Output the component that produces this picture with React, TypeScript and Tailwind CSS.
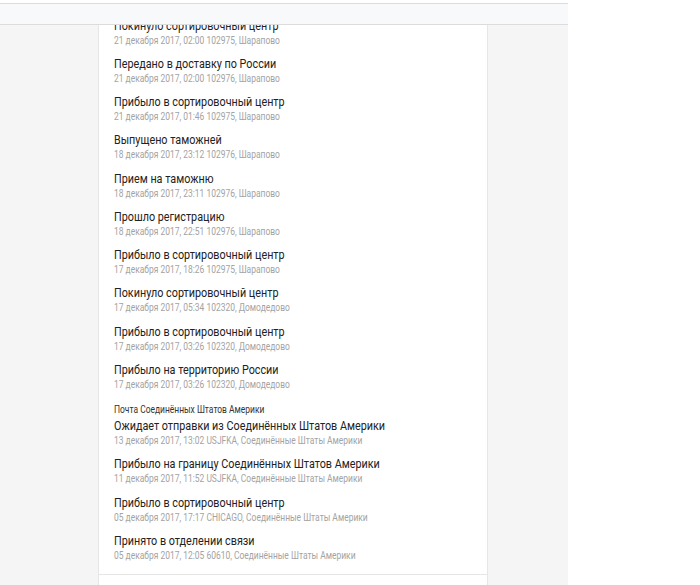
import React from "react";

type Ev = { t: string; s: string };

const ru: Ev[] = [
  { t: "Покинуло сортировочный центр", s: "21 декабря 2017, 02:00 102975, Шарапово" },
  { t: "Передано в доставку по России", s: "21 декабря 2017, 02:00 102976, Шарапово" },
  { t: "Прибыло в сортировочный центр", s: "21 декабря 2017, 01:46 102975, Шарапово" },
  { t: "Выпущено таможней", s: "18 декабря 2017, 23:12 102976, Шарапово" },
  { t: "Прием на таможню", s: "18 декабря 2017, 23:11 102976, Шарапово" },
  { t: "Прошло регистрацию", s: "18 декабря 2017, 22:51 102976, Шарапово" },
  { t: "Прибыло в сортировочный центр", s: "17 декабря 2017, 18:26 102975, Шарапово" },
  { t: "Покинуло сортировочный центр", s: "17 декабря 2017, 05:34 102320, Домодедово" },
  { t: "Прибыло в сортировочный центр", s: "17 декабря 2017, 03:26 102320, Домодедово" },
  { t: "Прибыло на территорию России", s: "17 декабря 2017, 03:26 102320, Домодедово" },
];

const us: Ev[] = [
  { t: "Ожидает отправки из Соединённых Штатов Америки", s: "13 декабря 2017, 13:02 USJFKA, Соединённые Штаты Америки" },
  { t: "Прибыло на границу Соединённых Штатов Америки", s: "11 декабря 2017, 11:52 USJFKA, Соединённые Штаты Америки" },
  { t: "Прибыло в сортировочный центр", s: "05 декабря 2017, 17:17 CHICAGO, Соединённые Штаты Америки" },
  { t: "Принято в отделении связи", s: "05 декабря 2017, 12:05 60610, Соединённые Штаты Америки" },
];

function Item({ e }: { e: Ev }) {
  return (
    <div className="h-[38.25px]">
      <div className="text-[13px] leading-[16px] text-[#222] whitespace-nowrap">{e.t}</div>
      <div className="text-[10.2px] leading-[13px] text-[#a3a3a3] whitespace-nowrap">{e.s}</div>
    </div>
  );
}

export default function App() {
  return (
    <div
      className="relative w-[700px] h-[585px] overflow-hidden bg-white"
      style={{ fontFamily: "Roboto, 'Noto Sans', sans-serif" }}
    >
      <div className="w-[568px] h-full bg-[#f5f5f5]">
        <div className="ml-[98px] w-[390px] h-full bg-white border-x border-[#e6e6e6] pt-[17.5px]">
          <div className="pl-[15px]">
            <div className="origin-left scale-x-[0.83]">
              {ru.map((e, i) => (
                <Item key={i} e={e} />
              ))}
              <div className="pt-[3px] pb-[1px] text-[10.2px] leading-[14px] text-[#333] whitespace-nowrap">
                Почта Соединённых Штатов Америки
              </div>
              {us.map((e, i) => (
                <Item key={i} e={e} />
              ))}
            </div>
          </div>
          <div className="h-[4px] border-b border-[#e6e6e6]" />
        </div>
      </div>
      <div className="absolute top-0 left-0 w-[568px] h-[25px] bg-white">
        <div className="mt-[3px] h-[22px] border-y border-[#dcdcdc] bg-[#f8f9fa]" />
      </div>
    </div>
  );
}
